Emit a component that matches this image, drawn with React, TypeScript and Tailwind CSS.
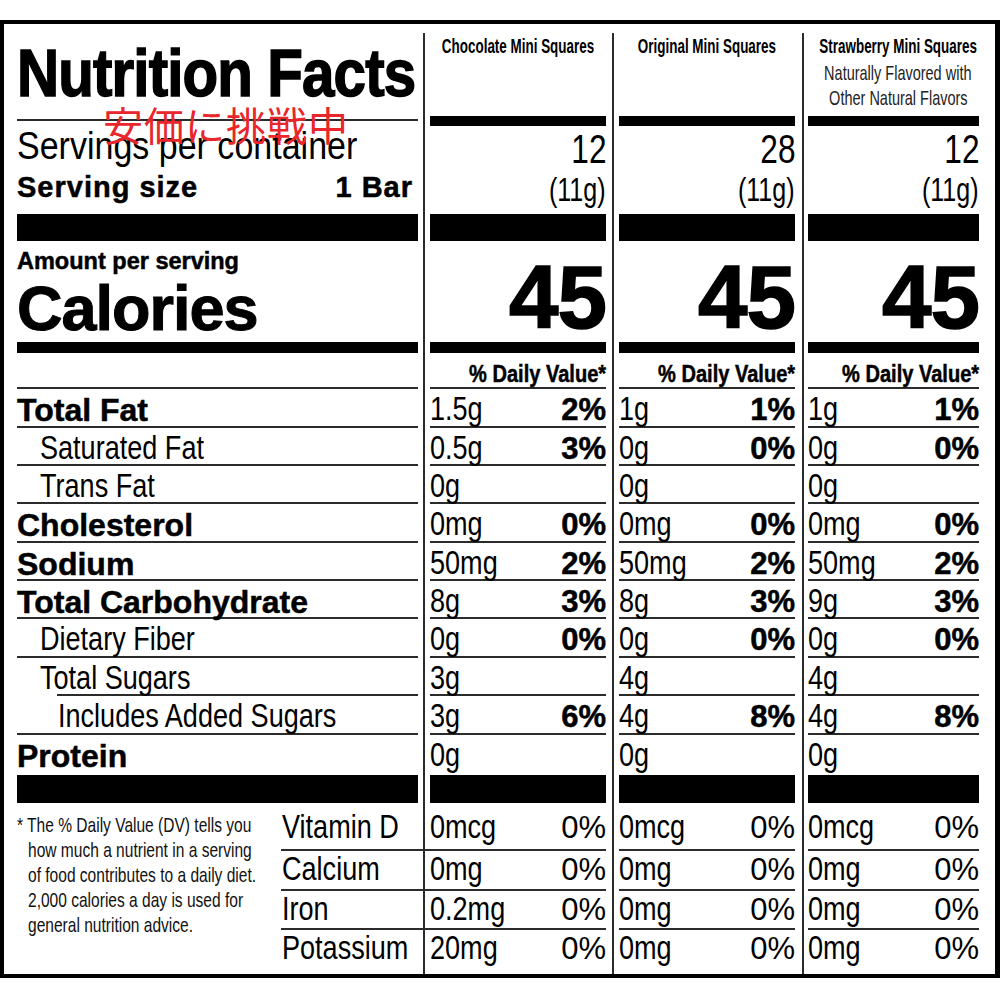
const SANS = "[font-family:'Liberation_Sans',Arial,sans-serif]";
const LINE = 'border-b-2 border-[#2b2b2b]';
const HEAVY = '[-webkit-text-stroke:0.5px_#000]';

type Pair = [string, string];

interface NutrientRow {
  label: string;
  kind: 'bold' | 'sub' | 'subsub';
  height: string;
  vals: Pair[];
  last?: boolean;
  indentLine?: boolean;
}

const nutrients: NutrientRow[] = [
  { label: 'Total Fat', kind: 'bold', height: 'h-[39px]', vals: [['1.5g', '2%'], ['1g', '1%'], ['1g', '1%']] },
  { label: 'Saturated Fat', kind: 'sub', height: 'h-[38px]', vals: [['0.5g', '3%'], ['0g', '0%'], ['0g', '0%']] },
  { label: 'Trans Fat', kind: 'sub', height: 'h-[38px]', vals: [['0g', ''], ['0g', ''], ['0g', '']] },
  { label: 'Cholesterol', kind: 'bold', height: 'h-[39px]', vals: [['0mg', '0%'], ['0mg', '0%'], ['0mg', '0%']] },
  { label: 'Sodium', kind: 'bold', height: 'h-[38px]', vals: [['50mg', '2%'], ['50mg', '2%'], ['50mg', '2%']] },
  { label: 'Total Carbohydrate', kind: 'bold', height: 'h-[38px]', vals: [['8g', '3%'], ['8g', '3%'], ['9g', '3%']] },
  { label: 'Dietary Fiber', kind: 'sub', height: 'h-[39px]', vals: [['0g', '0%'], ['0g', '0%'], ['0g', '0%']] },
  { label: 'Total Sugars', kind: 'sub', height: 'h-[38px]', indentLine: true, vals: [['3g', ''], ['4g', ''], ['4g', '']] },
  { label: 'Includes Added Sugars', kind: 'subsub', height: 'h-[39px]', vals: [['3g', '6%'], ['4g', '8%'], ['4g', '8%']] },
  { label: 'Protein', kind: 'bold', height: 'h-[40px]', last: true, vals: [['0g', ''], ['0g', ''], ['0g', '']] },
];

const vitamins: { label: string; height: string; pad: string; vals: Pair[] }[] = [
  { label: 'Vitamin D', height: 'h-[48px]', pad: 'pt-[7px]', vals: [['0mcg', '0%'], ['0mcg', '0%'], ['0mcg', '0%']] },
  { label: 'Calcium', height: 'h-[40px]', pad: 'pt-[1px]', vals: [['0mg', '0%'], ['0mg', '0%'], ['0mg', '0%']] },
  { label: 'Iron', height: 'h-[39px]', pad: 'pt-[1px]', vals: [['0.2mg', '0%'], ['0mg', '0%'], ['0mg', '0%']] },
  { label: 'Potassium', height: 'flex-1', pad: 'pt-[1px]', vals: [['20mg', '0%'], ['0mg', '0%'], ['0mg', '0%']] },
];

const footnote = [
  '* The % Daily Value (DV) tells you',
  'how much a nutrient in a serving',
  'of food contributes to a daily diet.',
  '2,000 calories a day is used for',
  'general nutrition advice.',
];

const products = [
  { name: 'Chocolate Mini Squares', servings: '12', width: 'w-[189px]', pad: 'pl-[5px] pr-[6px]', head: '' },
  { name: 'Original Mini Squares', servings: '28', width: 'w-[190px]', pad: 'pl-[5px] pr-[7px]', head: '' },
  {
    name: 'Strawberry Mini Squares',
    note: ['Naturally Flavored with', 'Other Natural Flavors'],
    servings: '12',
    width: 'w-[193px]',
    pad: 'pl-[4px] pr-[16px]',
    head: 'pl-[9px]',
  },
];

function labelClass(kind: NutrientRow['kind']) {
  if (kind === 'bold') return `${SANS} ${HEAVY} font-bold text-[32px] leading-none pt-[2px]`;
  if (kind === 'sub') return `${SANS} text-[33px] leading-none pl-[23px]`;
  return `${SANS} text-[33px] leading-none pl-[41px]`;
}

function labelText(kind: NutrientRow['kind']) {
  return kind === 'bold' ? 'inline-block whitespace-nowrap' : 'inline-block whitespace-nowrap origin-left scale-x-[0.82]';
}

function LabelColumn() {
  return (
    <div className="w-[419px] shrink-0 flex flex-col pl-[13px] pr-[5px]">
      <div className="h-[190px] shrink-0 flex flex-col">
        <h1
          className={`${SANS} font-bold text-[67px] leading-none mt-[15px] tracking-[-1px] whitespace-nowrap origin-left scale-x-[0.87] [-webkit-text-stroke:1.5px_#000]`}
        >
          Nutrition Facts
        </h1>
        <div className="mt-[13px] h-[2px] bg-[#2b2b2b]" />
        <div className={`${SANS} text-[38px] leading-none mt-[6px] whitespace-nowrap origin-left scale-x-[0.895]`}>
          Servings per container
        </div>
        <div className={`${SANS} ${HEAVY} font-bold text-[29px] leading-none mt-[8px] tracking-[1px] flex justify-between pr-[5px]`}>
          <span>Serving size</span>
          <span>1 Bar</span>
        </div>
      </div>
      <div className="h-[27px] shrink-0 bg-black" />

      <div className="h-[101px] shrink-0 flex flex-col">
        <div className={`${SANS} ${HEAVY} font-bold text-[23.5px] leading-none mt-[9px]`}>Amount per serving</div>
        <div className={`${SANS} font-bold text-[63px] leading-none mt-[3px] tracking-[-1px] [-webkit-text-stroke:1px_#000]`}>
          Calories
        </div>
      </div>
      <div className="h-[11px] shrink-0 bg-black" />
      <div className={`h-[36px] shrink-0 ${LINE}`} />

      {nutrients.map((r) => (
        <div
          key={r.label}
          className={`${r.height} shrink-0 flex items-baseline pt-[3px] ${r.last ? '' : LINE} ${r.indentLine ? 'ml-[40px]' : ''}`}
        >
          <span className={`${labelClass(r.kind)} ${r.indentLine ? '-ml-[40px]' : ''}`}>
            <span className={labelText(r.kind)}>{r.label}</span>
          </span>
        </div>
      ))}

      <div className="h-[28px] shrink-0 bg-black" />

      <div className="flex-1 min-h-0 flex">
        <div className={`w-[264px] shrink-0 ${SANS} text-[21px] leading-[25px] pt-[9px] text-[#111]`}>
          {footnote.map((l, i) => (
            <div key={l} className={i === 0 ? '' : 'pl-[11px]'}>
              <span className="inline-block whitespace-nowrap origin-left scale-x-[0.74]">{l}</span>
            </div>
          ))}
        </div>
        <div className="flex-1 flex flex-col">
          {vitamins.map((v, i) => (
            <div
              key={v.label}
              className={`${v.height} shrink-0 ${v.pad} ${i < vitamins.length - 1 ? LINE : ''} ${SANS} text-[33px] leading-none pl-[1px]`}
            >
              <span className="inline-block whitespace-nowrap origin-left scale-x-[0.82]">{v.label}</span>
            </div>
          ))}
        </div>
      </div>
    </div>
  );
}

function ValueColumn({ idx }: { idx: number }) {
  const p = products[idx];
  return (
    <div className={`${p.width} shrink-0 min-w-0 flex flex-col pt-[9px]`}>
      <div className={`flex-1 flex flex-col border-l-2 border-[#2b2b2b] ${p.pad}`}>
        <div className="h-[181px] shrink-0 flex flex-col">
          <div className={`h-[83px] flex flex-col items-center ${p.head}`}>
            <span
              className={`${SANS} font-bold text-[21px] leading-none mt-[2px] whitespace-nowrap inline-block scale-x-[0.64]`}
            >
              {p.name}
            </span>
            {p.note && (
              <div className="mt-[4px] flex flex-col items-center">
                {p.note.map((n) => (
                  <span
                    key={n}
                    className={`${SANS} text-[21px] leading-[25px] whitespace-nowrap inline-block scale-x-[0.69] text-[#222]`}
                  >
                    {n}
                  </span>
                ))}
              </div>
            )}
          </div>
          <div className="h-[10px] bg-black" />
          <div className={`${SANS} text-[40px] leading-none flex justify-end mt-[3px]`}>
            <span className="inline-block origin-right scale-x-[0.79]">{p.servings}</span>
          </div>
          <div className={`${SANS} text-[33px] leading-none flex justify-end mt-[4px]`}>
            <span className="inline-block origin-right scale-x-[0.76]">(11g)</span>
          </div>
        </div>
        <div className="h-[27px] shrink-0 bg-black" />

        <div className="h-[101px] shrink-0">
          <div className={`${SANS} font-bold text-[89px] leading-none text-right mt-[12px] tracking-[-1px] [-webkit-text-stroke:1.5px_#000]`}>
            45
          </div>
        </div>
        <div className="h-[11px] shrink-0 bg-black" />
        <div className={`h-[36px] shrink-0 ${LINE} flex justify-end`}>
          <span className={`${SANS} ${HEAVY} font-bold text-[24px] leading-none mt-[9px] whitespace-nowrap inline-block origin-right scale-x-[0.835]`}>
            % Daily Value*
          </span>
        </div>

        {nutrients.map((r) => (
          <div
            key={r.label}
            className={`${r.height} shrink-0 flex items-baseline justify-between pt-[3px] ${r.last ? '' : LINE}`}
          >
            <span className={`${SANS} text-[33px] leading-none inline-block whitespace-nowrap origin-left scale-x-[0.82]`}>
              {r.vals[idx][0]}
            </span>
            <span className={`${SANS} ${HEAVY} font-bold text-[31px] leading-none`}>{r.vals[idx][1]}</span>
          </div>
        ))}

        <div className="h-[28px] shrink-0 bg-black" />

        <div className="flex-1 flex flex-col">
          {vitamins.map((v, i) => (
            <div
              key={v.label}
              className={`${v.height} shrink-0 ${v.pad} flex items-baseline justify-between ${i < vitamins.length - 1 ? LINE : ''}`}
            >
              <span className={`${SANS} text-[33px] leading-none inline-block whitespace-nowrap origin-left scale-x-[0.82]`}>
                {v.vals[idx][0]}
              </span>
              <span className={`${SANS} text-[31px] leading-none`}>{v.vals[idx][1]}</span>
            </div>
          ))}
        </div>
      </div>
    </div>
  );
}

export default function App() {
  return (
    <div className="relative w-[1000px] h-[1000px] bg-white text-black overflow-hidden">
      <div className="mt-[20px] h-[958px] border-4 border-r-[5px] border-black flex">
        <LabelColumn />
        {products.map((p, i) => (
          <ValueColumn key={p.name} idx={i} />
        ))}
      </div>
      <span className="absolute left-[103px] top-[104px] text-[40px] leading-none tracking-[1px] text-[#e8262b] [font-family:'Noto_Sans_CJK_JP',sans-serif] whitespace-nowrap">
        安価に挑戦中
      </span>
    </div>
  );
}
